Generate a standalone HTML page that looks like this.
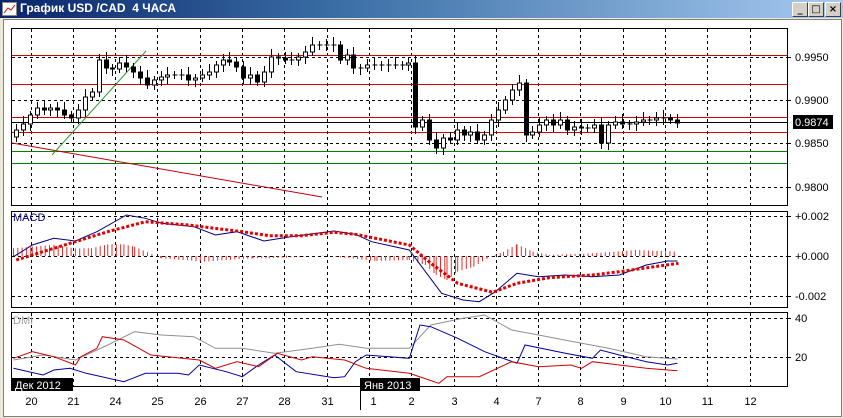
<!DOCTYPE html>
<html><head><meta charset="utf-8"><style>
body{margin:0;width:843px;height:418px;overflow:hidden;background:#ece9d8;font-family:"Liberation Sans",sans-serif}
#t{position:absolute;left:0;top:0;width:843px;height:18px;background:linear-gradient(to right,#0a246a,#3a6ea5 40%,#a6caf0);}
#t span{position:absolute;left:20px;top:1px;color:#fff;font:bold 12px "Liberation Sans","DejaVu Sans",sans-serif}
.b{position:absolute;top:2px;width:14px;height:13px;background:#d4d0c8;border:1px solid;border-color:#fff #404040 #404040 #fff;font:bold 10px "DejaVu Sans",sans-serif;text-align:center;line-height:13px;color:#000}
#w{position:absolute;left:3px;top:19px;width:837px;height:396px;background:#fff;border:1px solid #808080}
</style></head><body>
<div id="t"><svg width="16" height="14" style="position:absolute;left:2px;top:2px"><rect x="0.5" y="0.5" width="14" height="13" fill="#fff" stroke="#888"/><polyline points="2,11 6,6 9,8 13,3" fill="none" stroke="#c00"/></svg><span>График USD /CAD&nbsp; 4 ЧАСА</span></div>
<div class="b" style="left:792px">_</div><div class="b" style="left:808px">□</div><div class="b" style="left:825px">×</div>
<div id="w"></div>
<svg id="s" width="843" height="418" style="position:absolute;left:0;top:0" font-family="Liberation Sans, DejaVu Sans, sans-serif" font-size="11"></svg>
<script>
var s=document.getElementById('s'),h='';
function L(x1,y1,x2,y2,c,d,w){h+='<line x1="'+x1+'" y1="'+y1+'" x2="'+x2+'" y2="'+y2+'" stroke="'+c+'" stroke-width="'+(w||1)+'"'+(d?' stroke-dasharray="3,3"':'')+'/>';}
function T(x,y,t,c,a){h+='<text x="'+x+'" y="'+y+'" fill="'+(c||'#000')+'"'+(a?' text-anchor="'+a+'"':'')+'>'+t+'</text>';}
var gx=[];for(var i=0;i<18;i++)gx.push(Math.round(30.5+i*42.3)+.5);
// panels
[[28,205],[211,307],[312,386]].forEach(function(p){h+='<rect x="11.5" y="'+(p[0]+.5)+'" width="776" height="'+(p[1]-p[0])+'" fill="#fff" stroke="#000"/>';
gx.forEach(function(x){if(x<787)L(x,p[0]+1,x,p[1],'#000',1);});});
[57,100,143,187].forEach(function(y){L(12,y+.5,787,y+.5,'#000',1);L(787,y+.5,791,y+.5,'#000');});
T(795,61,'0.9950');T(795,104,'0.9900');T(795,147,'0.9850');T(795,191,'0.9800');
[55,84,117,132].forEach(function(y){L(12,y+.5,787,y+.5,'#d00000');});
L(12,122.5,787,122.5,'#000');[151,163].forEach(function(y){L(12,y+.5,787,y+.5,'#008000');});
L(12,143,322,197,'#c00010');L(52,155,146,51,'#2a9a2a');
// candles
var c=[137,130,124,115,108,110,108,110,115,118,110,97,92,60,68,69,63,67,72,78,85,80,77,75,75,75,80,78,75,72,65,60,62,67,78,75,82,72,57,58,60,60,57,52,45,45,45,45,60,55,68,68,65,65,65,65,65,65,63,127,120,140,148,138,140,130,135,132,140,135,120,110,100,90,83,135,132,125,120,125,120,130,127,128,128,125,143,125,122,124,124,122,120,120,118,118,120,123];
var dx=(677-16)/(c.length-2);
for(var i=1;i<c.length;i++){var x=Math.round(16+(i-1)*dx)+.5,o=c[i-1],cl=c[i];var t=Math.min(o,cl),b=Math.max(o,cl);
L(x,t-4-(i%3)*2,x,b+4+(i%4),'#000');
if(b-t<1)L(x-2,t,x+3,t,'#000');else h+='<rect x="'+(x-2)+'" y="'+t+'" width="4" height="'+(b-t)+'" fill="'+(cl>o?'#000':'#fff')+'" stroke="#000"/>';}
h+='<rect x="793" y="115" width="40" height="14" fill="#000"/>';T(795,126,'0.9874','#fff');
// MACD
[216,256,296].forEach(function(y){L(12,y+.5,787,y+.5,'#000',1);L(787,y+.5,791,y+.5,'#000');});
T(795,220,'+0.002');T(795,260,'+0.000');T(795,300,'-0.002');
T(13,221,'MACD','#000080');
function P(a,col,dash,w){var p=[];for(var i=0;i<a.length;i+=2)p.push((a[i]/1.857).toFixed(1)+','+(205+a[i+1]/3).toFixed(1));h+='<polyline points="'+p.join(' ')+'" fill="none" stroke="'+col+'" stroke-width="'+(w||1)+'"'+(dash?' stroke-dasharray="3,2"':'')+'/>';}
// histogram
var hb=[[25,130],[60,125],[100,120],[140,130],[170,130],[200,118],[230,118],[250,125],[300,160],[380,170],[420,165],[470,160],[500,160],[600,152],[700,168],[760,165],[790,180],[810,210],[830,225],[850,200],[880,185],[905,160],[935,140],[960,118],[990,140],[1020,150],[1100,145],[1180,135],[1260,140]];
for(var i=0;i<hb.length-1;i++){var a=hb[i],b=hb[i+1];for(var zx=a[0];zx<b[0];zx+=8){var zy=a[1]+(b[1]-a[1])*(zx-a[0])/(b[0]-a[0]);var x=(zx/1.857).toFixed(1);L(x,256,x,(205+zy/3).toFixed(1),'#e03030');}}
P([25,155,60,120,100,100,140,108,180,80,235,30,270,40,300,55,360,65,400,90,440,80,490,108,540,95,620,78,660,88,690,110,760,135,820,265,860,285,890,290,920,260,960,205,1000,215,1050,210,1100,215,1150,210,1200,180,1240,168,1258,168],'#000080');
P([30,165,100,130,200,80,270,50,350,60,450,80,500,92,560,92,620,82,660,88,760,120,800,175,850,235,915,262,960,235,1020,218,1100,210,1150,200,1260,175],'#e00000',1,3);
// DMI
[318,357].forEach(function(y){L(12,y+.5,787,y+.5,'#000',1);L(787,y+.5,791,y+.5,'#000');});
T(795,322,'40');T(795,361,'20');T(13,324,'DMI','#a0a0a0');
P([25,465,80,450,140,465,200,420,250,380,300,390,360,395,400,430,450,430,510,445,580,430,630,418,680,430,760,430,800,360,860,340,900,330,950,375,1000,390,1080,415,1130,430,1200,455,1258,462],'#909090');
P([25,490,80,510,100,495,130,490,160,505,230,530,270,505,330,505,350,510,370,480,420,500,450,515,480,480,510,450,550,500,620,518,640,515,660,470,680,450,760,460,780,360,800,365,850,400,900,440,960,475,975,420,1050,445,1100,460,1115,435,1150,450,1200,470,1240,480,1258,475],'#0000a0');
P([25,460,60,440,100,455,140,480,150,455,180,430,190,395,230,405,280,450,370,465,400,490,440,470,480,485,515,445,560,465,580,455,640,465,680,490,760,505,815,535,830,515,890,515,950,470,1000,485,1060,480,1080,490,1100,470,1150,480,1200,490,1258,497],'#d00000');
// dates
h+='<rect x="11" y="378" width="62" height="13" fill="#000"/>';T(15,389,'Дек 2012','#fff');
h+='<rect x="360" y="378" width="60" height="13" fill="#000"/>';T(364,389,'Янв 2013','#fff');
L(360.5,386,360.5,410,'#000');
['20','21','24','25','26','27','28','31','1','2','3','4','7','8','9','10','11','12'].forEach(function(d,i){T(gx[i]-(i==8?-4:0),405,d,'#000','middle');});
s.innerHTML=h;
</script>
</body></html>
